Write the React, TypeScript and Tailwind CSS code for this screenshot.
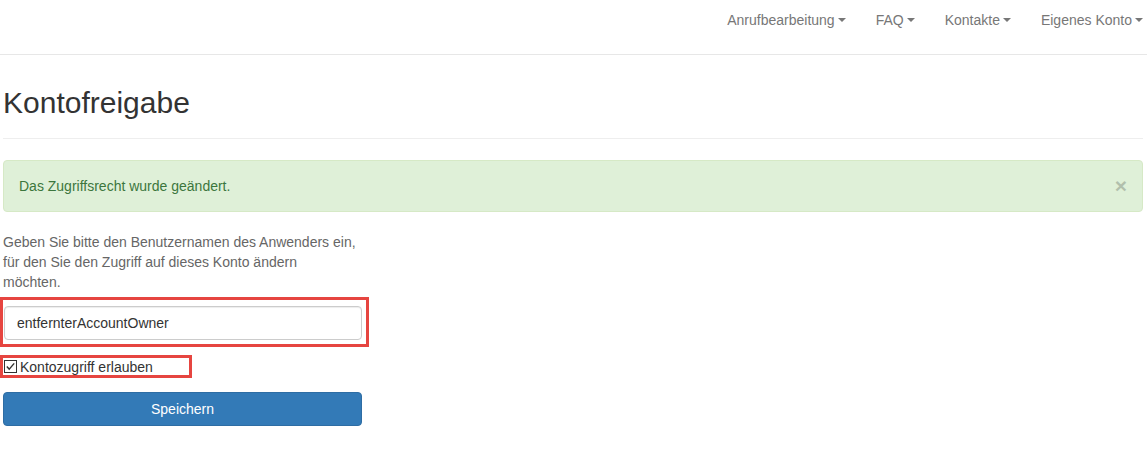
import React from 'react';

const navItems = ['Anrufbearbeitung', 'FAQ', 'Kontakte', 'Eigenes Konto'];

const Caret = () => (
  <span className="ml-[3px] inline-block h-0 w-0 border-x-[4px] border-t-[4px] border-x-transparent border-t-[#777] align-middle" />
);

export default function App() {
  return (
    <div className="min-h-screen bg-white text-[14px] leading-[20px] text-[#333] font-['Liberation_Sans',Arial,sans-serif]">
      {/* Navbar */}
      <nav className="flex h-[55px] justify-end border-b border-[#e7e7e7] pr-[4px]">
        <ul className="flex h-[40px] items-center gap-[30px]">
          {navItems.map((item) => (
            <li key={item} className="flex items-center text-[#777]">
              {item}
              <Caret />
            </li>
          ))}
        </ul>
      </nav>

      <div className="pl-[3px] pr-[4px]">
        {/* Page header */}
        <div className="mb-[21px] border-b border-[#eee] pt-[31px] pb-[9px]">
          <h1 className="mt-0 mb-[10px] text-[30px] leading-[33px] font-normal text-[#333]">
            Kontofreigabe
          </h1>
        </div>

        {/* Success alert */}
        <div className="mb-[20px] flex items-center justify-between rounded-[4px] border border-[#d6e9c6] bg-[#dff0d8] px-[15px] py-[15px] text-[#3c763d]">
          <span>Das Zugriffsrecht wurde geändert.</span>
          <span className="text-[21px] leading-[20px] font-bold text-black opacity-20">×</span>
        </div>

        {/* Form */}
        <div className="w-[359px]">
          <p className="mb-[5px] text-[#666]">
            Geben Sie bitte den Benutzernamen des Anwenders ein,
            <br />
            für den Sie den Zugriff auf dieses Konto ändern
            <br />
            möchten.
          </p>

          <div className="-ml-[3px] w-[369px] border-[3px] border-[#e64540] pt-[6px] pb-[4px] pl-[1px] pr-[4px]">
            <input
              type="text"
              readOnly
              value="entfernterAccountOwner"
              className="h-[34px] w-full rounded-[4px] border border-[#ccc] px-[12px] text-[14px] text-[#333] shadow-[inset_0_1px_1px_rgba(0,0,0,0.075)] outline-none"
            />
          </div>

          <div className="-ml-[3px] mt-[8px] flex h-[23px] w-[192px] items-center border-[3px] border-[#e64540] pl-[1px]">
            <svg width="13" height="13" viewBox="0 0 13 13" className="shrink-0">
              <rect x="0.5" y="0.5" width="12" height="12" fill="#fff" stroke="#333" />
              <path d="M2.8 6.6 L5.2 9.1 L10.2 3.4" fill="none" stroke="#333" strokeWidth="1.4" />
            </svg>
            <span className="ml-[3px] whitespace-nowrap text-[#333]">Kontozugriff erlauben</span>
          </div>

          <button className="mt-[14px] flex h-[34px] w-full items-center justify-center rounded-[4px] border border-[#2e6da4] bg-[#337ab7] text-[14px] text-white">
            Speichern
          </button>
        </div>
      </div>
    </div>
  );
}
